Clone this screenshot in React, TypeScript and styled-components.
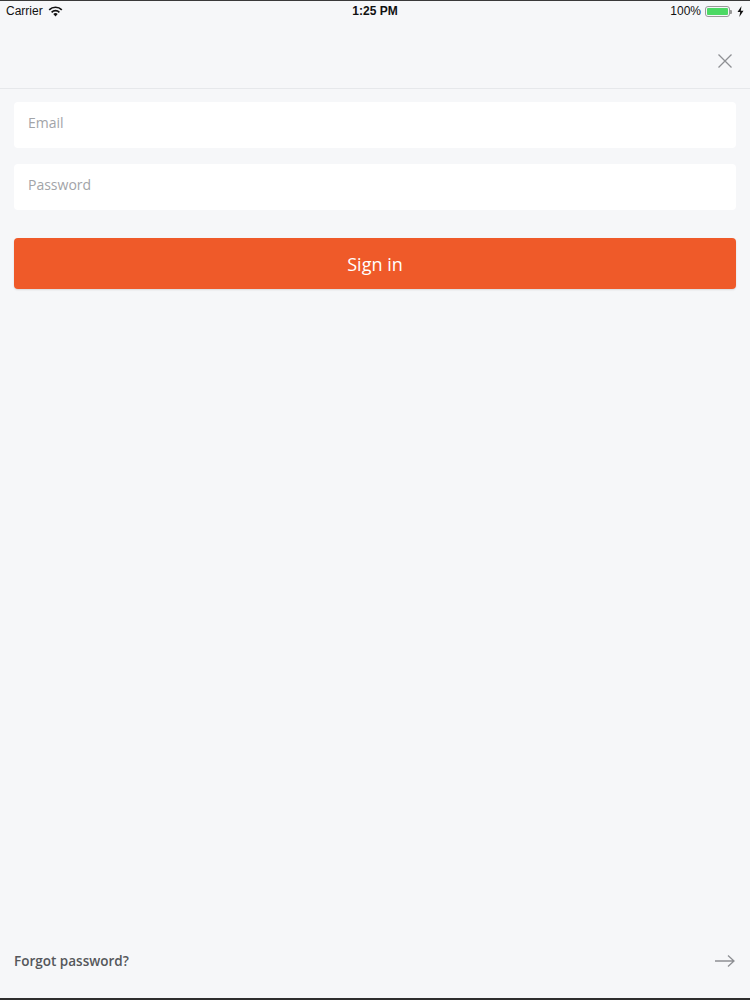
import React from "react";
import styled, { createGlobalStyle } from "styled-components";

const Global = createGlobalStyle`
  html, body { margin: 0; padding: 0; background: #f6f7f9; }
  #root { width: 750px; height: 1000px; }
  * { box-sizing: border-box; }
`;

const Screen = styled.div`
  width: 750px;
  height: 1000px;
  display: flex;
  flex-direction: column;
  background: #f6f7f9;
  border-top: 1px solid #3a3a3a;
  border-bottom: 2px solid #2e2e2e;
  font-family: "Open Sans", sans-serif;
`;

const StatusBar = styled.div`
  height: 20px;
  display: grid;
  grid-template-columns: 1fr auto 1fr;
  align-items: center;
  padding: 0 6px;
  font-family: "Liberation Sans", Arial, sans-serif;
  font-size: 12px;
  color: #111;
`;

const StatusLeft = styled.div`
  display: flex;
  align-items: center;
  gap: 5px;
`;

const StatusTime = styled.div`
  font-weight: 700;
`;

const StatusRight = styled.div`
  display: flex;
  align-items: center;
  justify-content: flex-end;
  gap: 4px;
`;

const Battery = styled.div`
  width: 25px;
  height: 11px;
  border: 1px solid #999;
  border-radius: 3px;
  padding: 1px;
  position: relative;
  &::after {
    content: "";
    position: absolute;
    right: -3px;
    top: 3px;
    width: 2px;
    height: 4px;
    background: #999;
    border-radius: 0 1px 1px 0;
  }
`;

const BatteryFill = styled.div`
  width: 100%;
  height: 100%;
  background: #4cd964;
  border-radius: 1px;
`;

const Header = styled.div`
  height: 68px;
  display: flex;
  align-items: flex-end;
  justify-content: flex-end;
  padding: 0 17px 19px 0;
  border-bottom: 1px solid #e6e8eb;
`;

const IconButton = styled.button`
  border: none;
  background: none;
  padding: 0;
  display: flex;
  cursor: pointer;
`;

const Form = styled.div`
  display: flex;
  flex-direction: column;
  padding: 13px 14px 0;
  gap: 16px;
`;

const Field = styled.input`
  height: 46px;
  width: 100%;
  border: none;
  border-radius: 4px;
  background: #fff;
  padding: 0 14px 6px;
  font-family: "Open Sans", sans-serif;
  font-size: 14px;
  color: #333;
  outline: none;
  &::placeholder { color: #a2a4a8; }
`;

const SignIn = styled.button`
  margin-top: 12px;
  height: 51px;
  width: 100%;
  border: none;
  border-radius: 4px;
  background: #ef5a29;
  color: #fff;
  font-family: "Open Sans", sans-serif;
  font-size: 18px;
  box-shadow: 0 1px 2px rgba(0, 0, 0, 0.12);
  cursor: pointer;
`;

const Spacer = styled.div`
  flex: 1;
`;

const Footer = styled.div`
  height: 56px;
  display: flex;
  align-items: center;
  justify-content: space-between;
  padding: 0 14px 18px;
`;

const Forgot = styled.span`
  font-size: 13.5px;
  font-weight: 600;
  color: #55575b;
`;

export default function App() {
  return (
    <>
      <Global />
      <Screen>
        <StatusBar>
          <StatusLeft>
            <span>Carrier</span>
            <svg width="15" height="11" viewBox="0 0 15 11">
              <path d="M7.5 10.5 L5.3 8.1 A3.2 3.2 0 0 1 9.7 8.1 Z" fill="#111" />
              <path d="M3.6 6.3 A5.6 5.6 0 0 1 11.4 6.3" stroke="#111" strokeWidth="1.7" fill="none" />
              <path d="M1.2 3.8 A9 9 0 0 1 13.8 3.8" stroke="#111" strokeWidth="1.7" fill="none" />
            </svg>
          </StatusLeft>
          <StatusTime>1:25 PM</StatusTime>
          <StatusRight>
            <span>100%</span>
            <Battery>
              <BatteryFill />
            </Battery>
            <svg width="7" height="11" viewBox="0 0 7 11" style={{ marginLeft: 3 }}>
              <path d="M4.5 0 L0.5 6 H3.2 L2.3 11 L6.5 4.8 H3.8 Z" fill="#111" />
            </svg>
          </StatusRight>
        </StatusBar>
        <Header>
          <IconButton aria-label="Close">
            <svg width="16" height="16" viewBox="0 0 16 16">
              <path d="M1.5 1.5 L14.5 14.5 M14.5 1.5 L1.5 14.5" stroke="#8e9094" strokeWidth="1.3" fill="none" />
            </svg>
          </IconButton>
        </Header>
        <Form>
          <Field placeholder="Email" />
          <Field placeholder="Password" type="password" />
          <SignIn>Sign in</SignIn>
        </Form>
        <Spacer />
        <Footer>
          <Forgot>Forgot password?</Forgot>
          <IconButton aria-label="Next">
            <svg width="22" height="14" viewBox="0 0 22 14">
              <path d="M1 7 H20 M14 1.5 L20 7 L14 12.5" stroke="#8e9094" strokeWidth="1.3" fill="none" />
            </svg>
          </IconButton>
        </Footer>
      </Screen>
    </>
  );
}
